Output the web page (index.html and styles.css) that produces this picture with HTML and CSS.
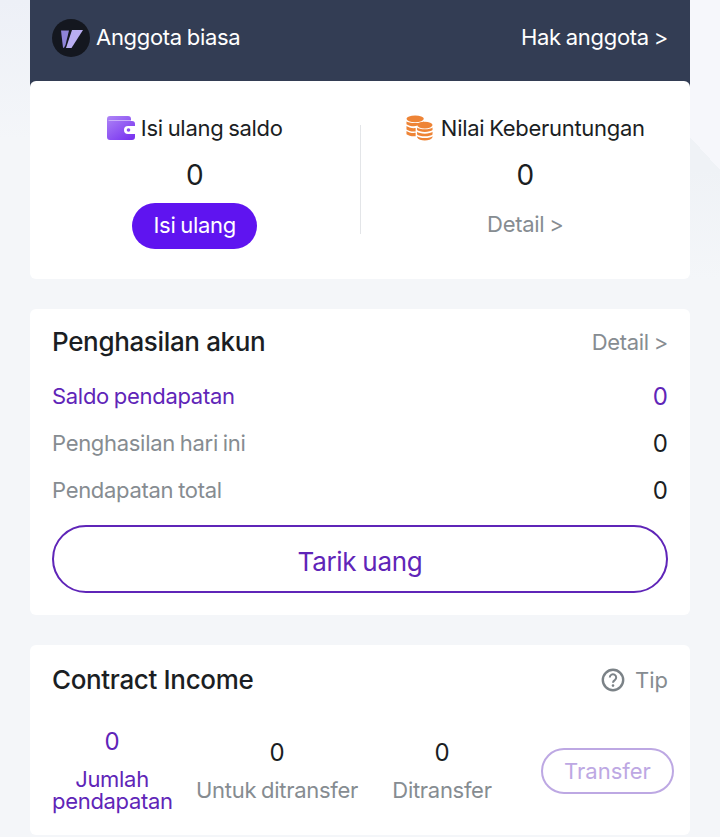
FILE: index.html
```html
<!DOCTYPE html>
<html lang="en">

<head>
  <meta charset="UTF-8">
  <meta name="viewport" content="width=device-width, initial-scale=1.0">
  <title>Akun</title>
  <link rel="stylesheet" href="styles.css">
</head>

<body>
  <div class="page">
    <div class="member-bar">
      <div class="member-name">
        <svg class="member-logo" viewBox="0 0 38 38">
          <circle cx="19" cy="19" r="19" fill="#14171f" />
          <path d="M9 11.500h8l-3.500 14.500-1.500 2.700h-1z" fill="#8f84d8" />
          <path d="M20 11h11L19.500 29h-5.500z" fill="#b9aef2" />
        </svg>
        <span class="member-text">Anggota biasa</span>
      </div>
      <span class="member-text">Hak anggota &gt;</span>
    </div>

    <div class="card balance-card">
      <div class="balance-col">
        <div class="balance-title">
          <svg class="wallet-icon" viewBox="0 0 28 24">
            <defs>
              <linearGradient id="wallet" x1="0" y1="0" x2="0.800" y2="1">
                <stop offset="0" stop-color="#ae85f6" />
                <stop offset="1" stop-color="#7a35f0" />
              </linearGradient>
            </defs>
            <path d="M3 0h18a3 3 0 0 1 3 3v2h1a3 3 0 0 1 3 3v2h-7a4 4 0 0 0 0 8h7v3a3 3 0 0 1-3 3H3a3 3 0 0 1-3-3V3a3 3 0 0 1 3-3z" fill="url(#wallet)" />
            <path d="M1.500 4.500H24" fill="none" stroke="#c9aefa" stroke-width="1" />
            <circle cx="21.500" cy="14" r="1.800" fill="#8a4cf2" />
          </svg>
          <span>Isi ulang saldo</span>
        </div>
        <div class="balance-num">0</div>
        <button class="topup-btn">Isi ulang</button>
      </div>
      <div class="balance-col">
        <div class="balance-title coins-title">
          <svg class="coins-icon" viewBox="0 0 28 26">
            <g fill="#ee8436">
              <ellipse cx="9.500" cy="3.500" rx="9" ry="3.500" />
              <path d="M.5 6c2 2.500 16 2.500 18 0v2.500c-3 0-7 1-8 2.500-4 .5-8-.5-10-2z" />
              <path d="M.5 11c2 1.500 6 2.500 9.500 2v3.500c-3.500.5-7.500-.5-9.500-2z" />
              <path d="M.5 16c2 1.500 6 2.500 9.500 2v3.500c-3.500.5-7.500-.5-9.500-2z" />
              <ellipse cx="19.500" cy="10" rx="8" ry="3.500" />
              <path d="M11.500 12.500c2 2.500 14 2.500 16 0v2.700c-2 2.500-14 2.500-16 0z" />
              <path d="M11.500 17c2 2.500 14 2.500 16 0v2.700c-2 2.500-14 2.500-16 0z" />
              <path d="M11.500 21.500c2 2.500 14 2.500 16 0v1c-2 4.500-14 4.500-16 0z" />
            </g>
          </svg>
          <span>Nilai Keberuntungan</span>
        </div>
        <div class="balance-num">0</div>
        <div class="balance-detail">Detail &gt;</div>
      </div>
    </div>

    <div class="card income-card">
      <div class="card-head">
        <h2>Penghasilan akun</h2>
        <span class="muted">Detail &gt;</span>
      </div>
      <div class="income-rows">
        <div class="income-row purple">
          <span class="income-label">Saldo pendapatan</span>
          <span class="income-num">0</span>
        </div>
        <div class="income-row">
          <span class="income-label muted">Penghasilan hari ini</span>
          <span class="income-num">0</span>
        </div>
        <div class="income-row">
          <span class="income-label muted">Pendapatan total</span>
          <span class="income-num">0</span>
        </div>
      </div>
      <button class="withdraw-btn">Tarik uang</button>
    </div>

    <div class="card contract-card">
      <div class="card-head">
        <h2>Contract Income</h2>
        <span class="tip muted">
          <svg class="tip-icon" viewBox="0 0 24 24">
            <circle cx="12" cy="12" r="10.200" fill="none" stroke="#7b8287" stroke-width="2.400" />
            <path d="M8.800 9.500a3.200 3.200 0 1 1 5 2.600c-1.200.8-1.800 1.300-1.800 2.600" fill="none" stroke="#7b8287" stroke-width="2" />
            <circle cx="12" cy="17.600" r="1.300" fill="#7b8287" />
          </svg>
          Tip
        </span>
      </div>
      <div class="contract-row">
        <div class="contract-col first purple">
          <div class="contract-num">0</div>
          <div>Jumlah pendapatan</div>
        </div>
        <div class="contract-col second">
          <div class="contract-num dark">0</div>
          <div class="muted">Untuk ditransfer</div>
        </div>
        <div class="contract-col third">
          <div class="contract-num dark">0</div>
          <div class="muted">Ditransfer</div>
        </div>
        <button class="transfer-btn">Transfer</button>
      </div>
    </div>
  </div>
</body>

</html>
```

FILE: styles.css
```css
html,
body {
  margin: 0;
  padding: 0;
}

body {
  height: 837px;
  overflow: hidden;
  font-family: Inter, "Liberation Sans", sans-serif;
  font-size: 22px;
  letter-spacing: -0.3px;
  word-spacing: -1px;
  color: #1b1e23;
  background-color: #f4f6f9;
  /* faint shapes behind the top cards */
  background-image:
    linear-gradient(to top right, #eff2f6 50%, #f6f7fb 50%),
    linear-gradient(#eff2f6, #f4f6f9),
    linear-gradient(#f6f7fb, #f6f7fb),
    linear-gradient(#edf0f7, #f4f6f9);
  background-repeat: no-repeat;
  background-size: 30px 33px, 30px 110px, 30px 137px, 30px 140px;
  background-position: right 0 top 137px, right 0 top 170px, right 0 top 0, left 0 top 0;
}

.page {
  width: 660px;
  margin: 0 auto;
}

.muted {
  color: #868c91;
}

.purple {
  color: #5f25b8;
}

.dark {
  color: #1b1e23;
}

.card {
  background-color: #fff;
  border-radius: 6px;
}

/* Member bar */
.member-bar {
  height: 87px;
  box-sizing: border-box;
  padding: 0 22px 12px;
  display: flex;
  align-items: center;
  justify-content: space-between;
  background-color: #333d54;
  color: #fff;
}

.member-name {
  display: flex;
  align-items: center;
  gap: 6px;
}

.member-logo {
  width: 38px;
  height: 38px;
}

.member-text {
  padding-bottom: 2px;
}

/* Balance card */
.balance-card {
  height: 198px;
  margin-top: -6px;
  position: relative;
  display: flex;
  align-items: center;
  box-sizing: border-box;
  padding-bottom: 2px;
}

.balance-col {
  flex: 1;
  height: 109px;
  display: flex;
  flex-direction: column;
  align-items: center;
}

.balance-col + .balance-col {
  border-left: 1px solid #e3e5e8;
}

.balance-title {
  height: 26px;
  flex-shrink: 0;
  display: flex;
  align-items: center;
  gap: 6px;
  margin-top: -10px;
}

.coins-title {
  gap: 8px;
}

.wallet-icon {
  width: 28px;
  height: 24px;
}

.coins-icon {
  width: 27px;
  height: 26px;
}

.balance-num {
  flex-shrink: 0;
  font-size: 28px;
  line-height: 34px;
  margin-top: 17px;
  letter-spacing: 0;
}

.topup-btn {
  flex-shrink: 0;
  width: 125px;
  height: 46px;
  margin-top: 11px;
  padding: 0 0 2px;
  border: 0;
  border-radius: 23px;
  background-color: #5f14f0;
  color: #fff;
  font: inherit;
  letter-spacing: inherit;
  word-spacing: inherit;
}

.balance-detail {
  flex-shrink: 0;
  margin-top: 18px;
  line-height: 28px;
  color: #868c91;
}

/* Income card */
.income-card {
  margin-top: 30px;
  height: 306px;
  box-sizing: border-box;
  padding: 0 22px;
}

.card-head {
  display: flex;
  align-items: center;
  justify-content: space-between;
  height: 66px;
}

h2 {
  margin: 0;
  padding-bottom: 2px;
  font-size: 26px;
  font-weight: 500;
  letter-spacing: -0.35px;
  word-spacing: 0;
}

.income-rows {
  margin-top: -2px;
}

.income-row {
  display: flex;
  justify-content: space-between;
  align-items: center;
  height: 47px;
}

.income-label {
  padding-bottom: 2px;
}

.income-num {
  font-size: 24px;
  letter-spacing: 0;
}

.withdraw-btn {
  display: block;
  width: 100%;
  height: 68px;
  margin-top: 11px;
  padding: 4px 0 0;
  border: 2px solid #5f25b8;
  border-radius: 34px;
  background-color: #fff;
  color: #5f25b8;
  font: inherit;
  font-size: 26px;
  letter-spacing: inherit;
  word-spacing: inherit;
}

/* Contract card */
.contract-card {
  margin-top: 30px;
  height: 190px;
  box-sizing: border-box;
  padding: 0 22px;
}

.contract-card .card-head {
  height: 70px;
}

.tip {
  display: flex;
  align-items: center;
  gap: 10px;
  letter-spacing: 0;
}

.tip-icon {
  width: 24px;
  height: 24px;
}

.contract-row {
  display: flex;
  align-items: center;
  height: 84px;
  margin-top: 13px;
  margin-right: -6px;
  line-height: 22px;
  text-align: center;
}

.contract-num {
  font-size: 24px;
  line-height: 26px;
  margin-bottom: 13px;
  letter-spacing: 0;
}

.first {
  width: 120px;
  flex-shrink: 0;
}

.second {
  margin-left: 22px;
  width: 166px;
  flex-shrink: 0;
}

.third {
  margin-left: 30px;
  width: 104px;
  flex-shrink: 0;
}

.transfer-btn {
  margin-left: 47px;
  margin-top: 2px;
  width: 133px;
  height: 46px;
  flex-shrink: 0;
  border: 2px solid #bda8e3;
  border-radius: 23px;
  background-color: #fff;
  color: #bda8e3;
  font: inherit;
  letter-spacing: 0;
}
```
